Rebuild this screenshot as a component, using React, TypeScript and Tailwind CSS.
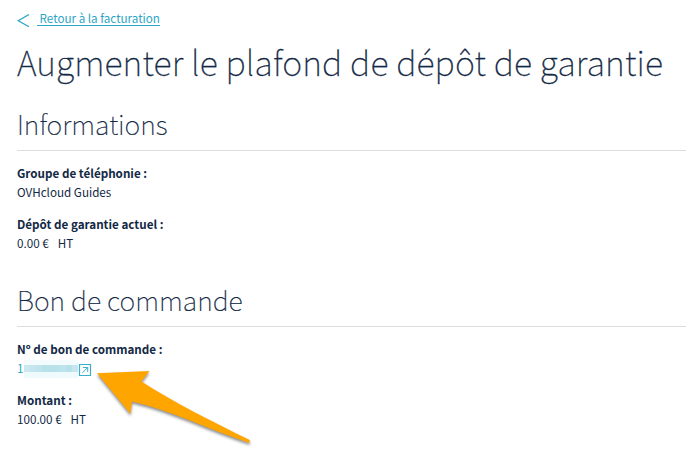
import type { ReactNode } from "react";

const ink = "text-[#122844]";

function Section({ title, children }: { title: string; children: ReactNode }) {
  return (
    <section className="flex flex-col">
      <h2 className="h-[44px] border-b border-[#dcdcdc] text-[26.75px] leading-[34px] font-thin [-webkit-text-stroke:0.2px_#122844] whitespace-pre">
        {title}
      </h2>
      <dl className="mt-[13px] flex flex-col gap-[13px] text-[11.65px] leading-[17px]">{children}</dl>
    </section>
  );
}

function Field({ label, children }: { label: string; children: ReactNode }) {
  return (
    <div className="whitespace-pre">
      <dt className="h-[19px] font-bold">{label}</dt>
      <dd className="h-[19px]">{children}</dd>
    </div>
  );
}

function ExternalIcon() {
  return (
    <svg className="mt-[4px] h-[14px] w-[14px]" viewBox="0 0 14 14" fill="none" stroke="#3aafcb">
      <path d="M1.5 1.5h11v11h-11z" strokeWidth="1.2" />
      <path d="M4.4 9.8 9.7 4.5M5 4.5h4.7V9" />
    </svg>
  );
}

const mosaic = [
  "bg-[#c9e8ef]", "bg-[#c5e6ee]", "bg-[#bfe4ed]", "bg-[#b9e1ea]", "bg-[#b7e0ea]",
  "bg-[#b9e1ea]", "bg-[#bde3ec]", "bg-[#b7e0ea]", "bg-[#c5e6ee]",
];

function MaskedNumber() {
  return (
    <div className="mt-[1px] flex h-[18px] w-[54px] flex-col">
      <div className="h-[5px] bg-[#f3fbfc]" />
      <div className="flex h-[7px]">
        {mosaic.map((shade, i) => <i key={i} className={"h-full w-[6px] " + shade} />)}
      </div>
      <div className="h-[6px] bg-[#effafc]" />
    </div>
  );
}

export default function App() {
  return (
    <main className={"relative h-[457px] w-[698px] overflow-hidden bg-white pl-[17px] pr-[12px] font-['Noto_Sans_CJK_SC','Noto_Sans',sans-serif] " + ink}>
      <a className="flex h-[38px] pt-[9px] text-[11.65px] leading-[17px] text-[#2ba5c4]">
        <svg className="mt-[5px] h-[14px] w-[14px]" viewBox="0 0 14 14" fill="none" stroke="#2ba5c4" strokeWidth="1.3">
          <path d="M12 0.5 1.3 6.7 12 12.7" />
        </svg>
        <span className="ml-[6px] whitespace-pre underline underline-offset-2"> Retour à la facturation</span>
      </a>
      <h1 className="h-[69px] text-[34px] leading-[47px] font-thin tracking-[0.14px] [-webkit-text-stroke:0.3px_#122844] whitespace-nowrap">
        Augmenter le plafond de dépôt de garantie
      </h1>
      <Section title="Informations">
        <Field label="Groupe de téléphonie :">OVHcloud Guides</Field>
        <Field label="Dépôt de garantie actuel :">{"0.00 €"}<span className="ml-[9px]">HT</span></Field>
      </Section>
      <div className="h-[30px]" />
      <Section title="Bon de commande">
        <Field label="Nº de bon de commande :">
          <span className="flex text-[#2ba5c4]">
            <span className="w-[7px]">1</span><MaskedNumber /><ExternalIcon />
          </span>
        </Field>
        <Field label="Montant :">{"100.00 €"}<span className="ml-[9px]">HT</span></Field>
      </Section>
      <svg className="absolute left-[90px] top-[360px] h-[97px] w-[170px] drop-shadow-[0_2px_1.5px_rgba(0,0,0,0.45)]" viewBox="90 360 170 97">
        <path fill="#ffa500" d="M97 373.3 149.5 371 141.5 381.5C175 403 211 421 249.8 440L249.5 443C210 430 170 410 132 401.5L130.5 414Z" />
      </svg>
    </main>
  );
}
